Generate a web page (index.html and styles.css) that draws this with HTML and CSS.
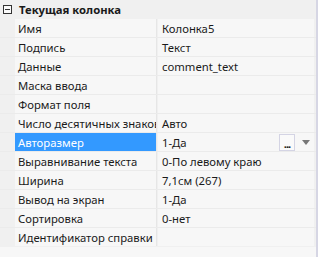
FILE: index.html
```html
<!DOCTYPE html>
<html>
<head>
  <title>Свойства колонки</title>
  <link rel="stylesheet" href="styles.css">
</head>
<body>
  <div class="grid">
    <div class="category">
      <span class="toggle"></span>
      <span class="category-title">Текущая колонка</span>
    </div>

    <div class="row"><div class="name">Имя</div><div class="value">Колонка5</div></div>
    <div class="row"><div class="name">Подпись</div><div class="value">Текст</div></div>
    <div class="row"><div class="name">Данные</div><div class="value">comment_text</div></div>
    <div class="row"><div class="name">Маска ввода</div><div class="value"></div></div>
    <div class="row"><div class="name">Формат поля</div><div class="value"></div></div>
    <div class="row"><div class="name">Число десятичных знаков</div><div class="value">Авто</div></div>
    <div class="row selected">
      <div class="name">Авторазмер</div>
      <div class="value">
        <span class="value-text">1-Да</span>
        <span class="ellipsis">...</span>
        <span class="dropdown"></span>
      </div>
    </div>
    <div class="row"><div class="name">Выравнивание текста</div><div class="value">0-По левому краю</div></div>
    <div class="row"><div class="name">Ширина</div><div class="value">7,1см (267)</div></div>
    <div class="row"><div class="name">Вывод на экран</div><div class="value">1-Да</div></div>
    <div class="row"><div class="name">Сортировка</div><div class="value">0-нет</div></div>
    <div class="row"><div class="name">Идентификатор справки</div><div class="value"></div></div>
  </div>
</body>
</html>
```

FILE: styles.css
```css
body {
  margin: 0;
  font-family: "Noto Sans", "Open Sans", sans-serif;
  font-size: 11.3px;
  color: #1a1a1a;
  background-color: #f7f7f7;
}

.grid {
  width: 316px;
  height: 257px;
  border-right: 2px solid #d6d6e4;
  background-color: #f7f7f7;
  overflow: hidden;
}

.category {
  display: flex;
  align-items: center;
  height: 19px;
  background-color: #f0f0f0;
}

.toggle {
  position: relative;
  width: 7px;
  height: 7px;
  margin: 0 7px 0 3px;
  border: 1px solid #333;
  background-color: #fafafa;
}

.toggle::after {
  content: "";
  position: absolute;
  left: 1px;
  top: 3px;
  width: 5px;
  height: 1px;
  background-color: #333;
}

.category-title {
  font-weight: bold;
  color: #1a1a1a;
}

.row {
  display: grid;
  grid-template-columns: 142px 156px;
  column-gap: 1px;
  height: 18px;
  padding-left: 15px;
  border-bottom: 1px solid #ebebeb;
  background-color: #f0f0f0;
}

.row:last-child {
  border-bottom: 1px solid #f0f0f0;
}

.name,
.value {
  display: flex;
  align-items: center;
  background-color: #f7f7f7;
  white-space: nowrap;
  overflow: hidden;
}

.name {
  padding-left: 3px;
  background-color: #f7f7f7;
  border-right: 1px solid #e6e6e6;
}

.value {
  padding-left: 4px;
}

.selected .name {
  background-color: #3399ff;
  color: #fff;
}

.value-text {
  flex: 1;
}

.ellipsis {
  display: flex;
  align-items: flex-end;
  justify-content: center;
  box-sizing: border-box;
  width: 16px;
  height: 17px;
  margin-top: 1px;
  margin-right: 1px;
  border: 1px solid #d4d4e4;
  background-color: #fafafa;
  font-weight: bold;
  line-height: 12px;
  letter-spacing: -1px;
}

.dropdown {
  width: 0;
  height: 0;
  margin: 0 4px 0 6px;
  border-left: 4px solid transparent;
  border-right: 4px solid transparent;
  border-top: 5px solid #777;
}
```
